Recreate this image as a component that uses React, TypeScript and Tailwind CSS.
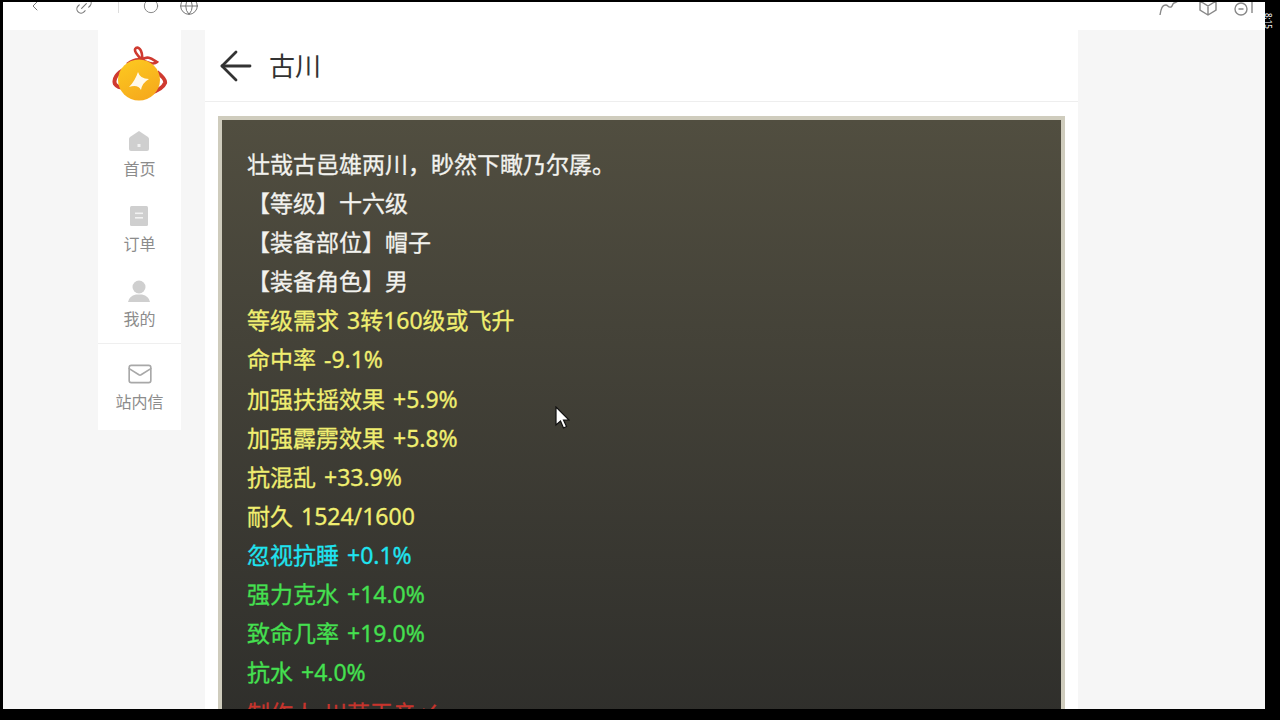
import React from 'react';
import { ArrowLeft, ChevronLeft, Link2, Circle, Globe, Mail } from 'lucide-react';

const lines = [
  { text: '壮哉古邑雄两川，眇然下瞰乃尔孱。', color: 'text-[#f2f2ee]' },
  { text: '【等级】十六级', color: 'text-[#f2f2ee]' },
  { text: '【装备部位】帽子', color: 'text-[#f2f2ee]' },
  { text: '【装备角色】男', color: 'text-[#f2f2ee]' },
  { text: '等级需求 3转160级或飞升', color: 'text-[#f0ee70]' },
  { text: '命中率 -9.1%', color: 'text-[#f0ee70]' },
  { text: '加强扶摇效果 +5.9%', color: 'text-[#f0ee70]' },
  { text: '加强霹雳效果 +5.8%', color: 'text-[#f0ee70]' },
  { text: '抗混乱 +33.9%', color: 'text-[#f0ee70]' },
  { text: '耐久 1524/1600', color: 'text-[#f0ee70]' },
  { text: '忽视抗睡 +0.1%', color: 'text-[#1fe4f0]' },
  { text: '强力克水 +14.0%', color: 'text-[#45e050]' },
  { text: '致命几率 +19.0%', color: 'text-[#45e050]' },
  { text: '抗水 +4.0%', color: 'text-[#45e050]' },
  { text: '制作人 川芎王亲〆', color: 'mt-[2px] text-[#c8342c]' },
];

const Logo = () => (
  <svg width="56" height="60" viewBox="0 0 56 60">
    <defs>
      <linearGradient id="ball" x1="0.2" y1="0" x2="0.7" y2="1">
        <stop offset="0" stopColor="#fcc820" />
        <stop offset="1" stopColor="#f6a91c" />
      </linearGradient>
    </defs>
    <path d="M13 23 C5 27 1 33 3 38 C5 41 9 42 13 42" fill="none" stroke="#cf3a30" strokeWidth="4" />
    <path d="M45 26 C50 30 54 34 53 37 C51 42 45 45 38 47" fill="none" stroke="#cf3a30" strokeWidth="4" />
    <path d="M30 14 C25 9 21 4 24 2 C28 0 31 7 30 14 C35 9 40 13 45 16 C42 19 36 17 30 14 C25 12 19 15 15 18" fill="none" stroke="#cf3a30" strokeWidth="2.6" />
    <ellipse cx="27" cy="34" rx="21" ry="20.5" fill="url(#ball)" />
    <path d="M26 26 Q28 33 37 33 Q30 37 29 44 Q26 38 17 41 Q23 35 26 26 Z" fill="#fff9ea" />
  </svg>
);

const HomeIcon = () => (
  <svg width="22" height="22" viewBox="0 0 22 22" fill="#cfcfcf">
    <path d="M11 1 L20 7 Q21 8 21 9 V19 Q21 21 19 21 H3 Q1 21 1 19 V9 Q1 8 2 7 Z" />
    <rect x="9.5" y="14" width="3" height="3" fill="#f2f2f2" />
  </svg>
);

const OrderIcon = () => (
  <svg width="22" height="22" viewBox="0 0 22 22" fill="#cfcfcf">
    <rect x="2" y="1" width="18" height="20" rx="1.5" />
    <rect x="7" y="7.5" width="8" height="1.6" fill="#f2f2f2" />
    <rect x="7" y="12" width="8" height="1.6" fill="#f2f2f2" />
  </svg>
);

const UserIcon = () => (
  <svg width="24" height="24" viewBox="0 0 24 24" fill="#cfcfcf">
    <circle cx="12" cy="8" r="6.5" />
    <path d="M1 23 Q2 17 9 15.5 H15 Q22 17 23 23 Z" />
  </svg>
);

const NavItem = ({ icon, label }: { icon: React.ReactNode; label: string }) => (
  <div className="h-[75px] shrink-0 flex flex-col items-center">
    <div className="h-[24px] flex items-center justify-center">{icon}</div>
    <span className="mt-[6px] text-[16px] leading-[20px] text-[#8c8c8c]">{label}</span>
  </div>
);

export default function App() {
  return (
    <div
      className="relative w-[1280px] h-[720px] overflow-hidden bg-black flex flex-col"
      style={{ fontFamily: '"Noto Sans", "Noto Sans CJK SC", sans-serif' }}
    >
      <div className="flex-1 min-h-0 flex pt-[2px] pl-[3px] pr-[15px] pb-[11px]">
        <div className="flex-1 min-w-0 flex flex-col bg-white overflow-hidden">
          {/* browser toolbar, cut off at the top */}
          <div className="h-[28px] shrink-0 bg-white overflow-hidden flex items-start justify-between pl-[24px] pr-[11px]">
            <div className="flex items-center text-[#777] -mt-[6px]">
              <ChevronLeft size={16} strokeWidth={1.5} />
              <Link2 size={20} strokeWidth={1.3} className="ml-[31px] -rotate-45" />
              <div className="w-px h-[14px] bg-[#ddd] ml-[24px]" />
              <Circle size={16} strokeWidth={1.3} className="ml-[24px]" />
              <Globe size={20} strokeWidth={1.2} className="ml-[20px]" />
            </div>
            <div className="flex items-center text-[#888] -mt-[6px] gap-[16px]">
              <svg width="24" height="20" viewBox="0 0 24 20" fill="none" stroke="#888" strokeWidth="1.4">
                <path d="M2 19 C3 13 4 9 8 9 C10 9 10 12 13 11 C15 10 14 8 16 7 C19 6 21 5 23 2" />
              </svg>
              <svg width="20" height="20" viewBox="0 0 20 20" fill="none" stroke="#888" strokeWidth="1.4">
                <path d="M2 5 L10 1 L18 5 V14 L10 19 L2 14 Z M2 5 L10 10 L18 5 M10 10 V19" />
              </svg>
              <svg width="20" height="20" viewBox="0 0 20 20" fill="none" stroke="#888" strokeWidth="1.4">
                <circle cx="7" cy="13" r="6" />
                <path d="M4.5 13 H9.5 M15 3 H18 V17" />
              </svg>
            </div>
          </div>

          <div className="flex-1 min-h-0 bg-[#f6f6f6] flex items-start pl-[95px] pr-[187px] overflow-hidden">
            <aside className="w-[83px] shrink-0 bg-white flex flex-col items-center h-[400px]">
              <div className="h-[99px] w-full shrink-0 flex items-start justify-center pt-[16px]">
                <Logo />
              </div>
              <NavItem icon={<HomeIcon />} label="首页" />
              <NavItem icon={<OrderIcon />} label="订单" />
              <NavItem icon={<UserIcon />} label="我的" />
              <div className="w-full border-t border-[#efefef] mt-[-11px] pt-[17px] flex flex-col items-center">
                <Mail size={26} strokeWidth={1.5} className="text-[#a8a8a8]" />
                <span className="mt-[5px] text-[16px] leading-[20px] text-[#8c8c8c]">站内信</span>
              </div>
            </aside>

            <main className="ml-[24px] flex-1 min-w-0 h-full bg-white overflow-hidden">
              <header className="h-[72px] border-b border-[#eeeeee] flex items-center pl-[7px]">
                <ArrowLeft size={48} strokeWidth={1.4} className="text-[#333]" />
                <span className="ml-[9px] mt-[2px] text-[26px] text-[#333]">古川</span>
              </header>
              <div className="pt-[14px] pl-[13px] pr-[13px]">
                <div className="border-[4px] border-[#cfccbd] bg-gradient-to-b from-[#514e40] to-[#2a2a28] h-[700px] pt-[25px] pl-[25px]">
                  {lines.map((line) => (
                    <div
                      key={line.text}
                      className={`text-[23px] leading-[39.1px] [word-spacing:2px] [-webkit-text-stroke:0.3px] ${line.color}`}
                    >
                      {line.text}
                    </div>
                  ))}
                </div>
              </div>
            </main>
          </div>
        </div>
      </div>

      {/* clock digits in the black margin */}
      <span className="absolute left-[1263px] top-[13px] text-[8px] leading-[10px] text-white [writing-mode:vertical-rl]">8:15</span>

      {/* mouse pointer captured in the recording */}
      <svg className="absolute left-[555px] top-[406px]" width="15" height="24" viewBox="0 0 15 24">
        <path d="M1 1 V19 L5.5 15 L8.5 22 L11.5 20.5 L8.5 14 H14 Z" fill="#fff" stroke="#111" strokeWidth="1.2" />
      </svg>
    </div>
  );
}
